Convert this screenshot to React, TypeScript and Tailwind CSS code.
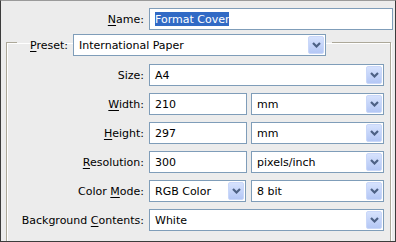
import React from 'react';

function Key({ children }: { children: React.ReactNode }) {
    return <span className="underline underline-offset-[2px] decoration-1">{children}</span>;
}

function DropButton() {
    return (
        <div className="flex h-full w-[16px] shrink-0 items-center justify-center rounded-[2px] border border-[#c9d7f9] bg-[linear-gradient(#d6e2fd,#b4c7f5)]">
            <svg width="9" height="6" viewBox="0 0 9 6">
                <polyline points="1,1 4.5,4.5 8,1" fill="none" stroke="#4d6185" strokeWidth="2.2" />
            </svg>
        </div>
    );
}

function Select({ value, width }: { value: string; width: string }) {
    return (
        <div className={`flex h-[22px] ${width} items-stretch border border-[#7f9db9] bg-white p-[1px]`}>
            <div className="flex flex-1 items-center pl-[4px] whitespace-nowrap overflow-hidden">{value}</div>
            <DropButton />
        </div>
    );
}

function TextBox({ value, width }: { value: string; width: string }) {
    return (
        <div className={`flex h-[22px] ${width} items-center border border-[#7f9db9] bg-white pl-[5px]`}>
            {value}
        </div>
    );
}

function Row({ label, children }: { label: React.ReactNode; children: React.ReactNode }) {
    return (
        <div className="flex h-[22px] items-center">
            <div className="w-[137px] shrink-0 text-right whitespace-nowrap">{label}</div>
            <div className="ml-[5px] flex gap-[4px]">{children}</div>
        </div>
    );
}

export default function App() {
    return (
        <div className="h-[242px] w-[396px] overflow-hidden border-x border-b border-t border-[#3c3c3c] border-t-[#9a9a9a] bg-[#ececec] font-['DejaVu_Sans',sans-serif] text-[11px] leading-none text-black">
            {/* Name */}
            <div className="mt-[7px] flex h-[22px] items-center">
                <div className="w-[143px] shrink-0 text-right">
                    <Key>N</Key>ame:
                </div>
                <div className="ml-[5px] flex h-[22px] w-[244px] items-center border border-[#7f9db9] bg-white pl-[5px]">
                    <span className="flex h-[14px] items-center bg-[#316ac5] text-white">Format Cover</span>
                </div>
            </div>

            {/* Preset group */}
            <fieldset className="mt-[4px] ml-[5px] mr-[4px] h-[240px] border border-[#aca899] p-0 shadow-[1px_1px_0_#fff,inset_1px_1px_0_#fff]">
                <legend className="ml-[10px] h-[16px] pl-[13px] pr-[6px]">
                    <div className="flex h-[22px] items-center">
                        <span>
                            <Key>P</Key>reset:
                        </span>
                        <div className="ml-[5px]">
                            <Select value="International Paper" width="w-[253px]" />
                        </div>
                    </div>
                </legend>
                <div className="flex flex-col gap-[7px] pt-[14px]">
                    <Row label={<>Size:</>}>
                        <Select value="A4" width="w-[235px]" />
                    </Row>
                    <Row label={<><Key>W</Key>idth:</>}>
                        <TextBox value="210" width="w-[98px]" />
                        <Select value="mm" width="w-[133px]" />
                    </Row>
                    <Row label={<><Key>H</Key>eight:</>}>
                        <TextBox value="297" width="w-[98px]" />
                        <Select value="mm" width="w-[133px]" />
                    </Row>
                    <Row label={<><Key>R</Key>esolution:</>}>
                        <TextBox value="300" width="w-[98px]" />
                        <Select value="pixels/inch" width="w-[133px]" />
                    </Row>
                    <Row label={<>Color <Key>M</Key>ode:</>}>
                        <Select value="RGB Color" width="w-[97px]" />
                        <div className="ml-[1px]">
                            <Select value="8 bit" width="w-[133px]" />
                        </div>
                    </Row>
                    <Row label={<>Background <Key>C</Key>ontents:</>}>
                        <Select value="White" width="w-[235px]" />
                    </Row>
                </div>
            </fieldset>
        </div>
    );
}
